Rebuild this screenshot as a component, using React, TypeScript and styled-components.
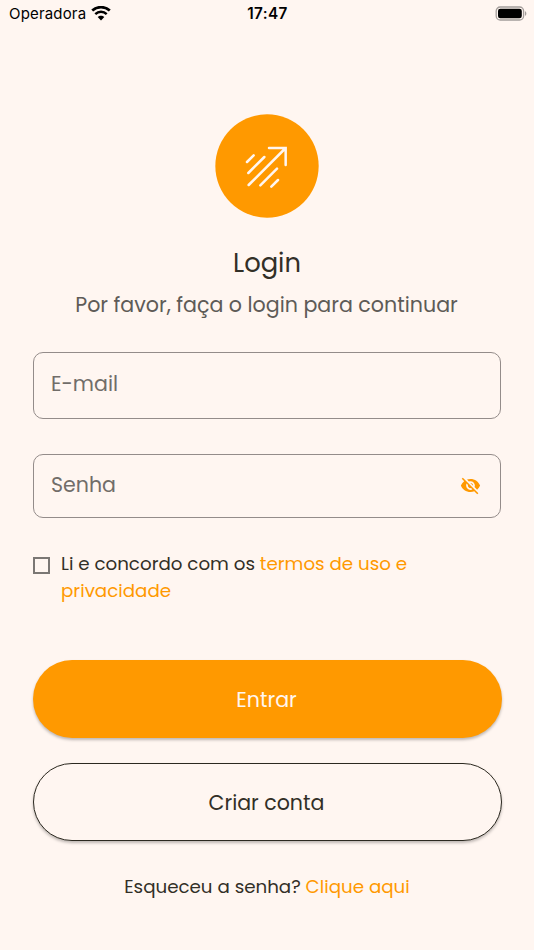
import React from "react";
import styled, { createGlobalStyle } from "styled-components";
import { MdVisibilityOff } from "react-icons/md";

const GlobalStyle = createGlobalStyle`
  * { box-sizing: border-box; }
  body { margin: 0; background: #fff6f1; }
  button, input { font: inherit; }
`;

const Screen = styled.main`
  display: flex;
  flex-direction: column;
  width: 534px;
  height: 950px;
  overflow: hidden;
  background: #fff6f1;
  color: #322f27;
  font-family: Poppins, Inter, sans-serif;
`;

const StatusBar = styled.header`
  display: grid;
  grid-template-columns: 1fr auto 1fr;
  align-items: center;
  height: 27px;
  padding: 0 7px 0 9px;
  color: #000;
  font-family: Inter, sans-serif;
  font-size: 15px;
`;

const Carrier = styled.span`
  display: flex;
  align-items: center;
  gap: 5px;
  letter-spacing: 0.17px;
`;

const Clock = styled.time`
  margin-right: 1px;
  font-size: 15.3px;
  font-weight: 600;
  letter-spacing: 0.35px;
`;

const Battery = styled.svg`
  justify-self: end;
`;

const Content = styled.section`
  display: flex;
  flex-direction: column;
  padding: 87px 33px 0;
`;

const Logo = styled.svg`
  align-self: center;
  width: 104px;
  height: 104px;
`;

const Title = styled.h1`
  margin: 25px 0 0;
  text-align: center;
  font-size: 25.8px;
  font-weight: 400;
  line-height: 40px;
`;

const Subtitle = styled.p`
  margin: 5px 0 0;
  padding-right: 1px;
  color: #5e5b57;
  text-align: center;
  font-size: 20.6px;
  line-height: 34px;
`;

const Field = styled.label<{ $height: number; $gap: number; $shift: number }>`
  display: flex;
  align-items: center;
  height: ${(p) => p.$height}px;
  margin-top: ${(p) => p.$gap}px;
  padding: 0 19px ${(p) => p.$shift}px 17px;
  border: 1px solid #948c8a;
  border-radius: 10px;
  color: #ff9900;
`;

const Input = styled.input`
  flex: 1;
  min-width: 0;
  padding: 0;
  border: 0;
  outline: 0;
  background: transparent;
  color: #322f27;
  font-size: 20.55px;
  line-height: 30px;
  &::placeholder { color: #716d69; opacity: 1; }
`;

const EyeButton = styled.button`
  display: flex;
  margin-top: 2px;
  padding: 0;
  border: 0;
  background: none;
  color: inherit;
`;

const Terms = styled.div`
  display: flex;
  gap: 11px;
  margin-top: 32px;
`;

const Checkbox = styled.input`
  appearance: none;
  flex: none;
  width: 17px;
  height: 17px;
  margin: 7px 0 0;
  border: 2px solid #7b7774;
`;

const TermsText = styled.p`
  margin: 0;
  font-size: 18.25px;
  line-height: 27px;
`;

const Link = styled.a`
  color: #ff9900;
`;

const Button = styled.button<{ $primary?: boolean }>`
  height: 78px;
  margin: ${(p) => (p.$primary ? 56 : 25)}px -0.5px 0;
  padding: 0 1px 0 0;
  border: ${(p) => (p.$primary ? "0" : "1.5px solid #2c2920")};
  border-radius: 39px;
  background: ${(p) => (p.$primary ? "#ff9900" : "#fff6f1")};
  color: ${(p) => (p.$primary ? "#fff6f1" : "#322f27")};
  box-shadow: 0 2px 3px rgba(0, 0, 0, 0.26);
  font-size: 20.55px;
`;

const Recovery = styled.p`
  margin: 32px 0 0;
  text-align: center;
  font-size: 18.25px;
  line-height: 27px;
`;

const WifiIcon = () => (
  <svg width="20" height="15" viewBox="0 0 20 15">
    <path d="M1.2 4.6C6.2 0 13.8 0 18.8 4.6" fill="none" stroke="#000" strokeWidth="2.7" />
    <path d="M4.3 8.1c3.2-3 8.2-3 11.4 0" fill="none" stroke="#000" strokeWidth="2.5" />
    <path d="M6.7 11.1c1.8-1.8 4.8-1.8 6.6 0L10 14.4z" />
  </svg>
);

const BatteryIcon = () => (
  <Battery width="32" height="15" viewBox="0 0 32 15">
    <rect x="1.2" y="1" width="27.4" height="13" rx="4" fill="none" stroke="#a39d9a" strokeWidth="1.3" />
    <rect x="3" y="2.8" width="23.8" height="9.4" rx="2.3" />
    <path d="M30 5.2c1.8.7 1.8 3.9 0 4.6z" fill="#a39d9a" />
  </Battery>
);

const ArrowLogo = () => (
  <Logo viewBox="24 24 312 312">
    <circle cx="180" cy="180" r="155" fill="#ff9900" />
    <path
      d="M186 126H236V177M236 126 125 237M120 168 140 148M124 201 172 153M160 238 210 188M193 242 213 222"
      fill="none"
      stroke="#fff6f1"
      strokeWidth="7.5"
      strokeLinecap="round"
      strokeLinejoin="miter"
    />
  </Logo>
);

export default function App() {
  return (
    <Screen>
      <GlobalStyle />
      <StatusBar>
        <Carrier>
          Operadora
          <WifiIcon />
        </Carrier>
        <Clock>17:47</Clock>
        <BatteryIcon />
      </StatusBar>
      <Content>
        <ArrowLogo />
        <Title>Login</Title>
        <Subtitle>Por favor, faça o login para continuar</Subtitle>
        <Field $height={67} $gap={30} $shift={4}>
          <Input type="email" placeholder="E-mail" />
        </Field>
        <Field $height={64} $gap={35} $shift={3}>
          <Input type="password" placeholder="Senha" />
          <EyeButton aria-label="Mostrar senha">
            <MdVisibilityOff size={21} />
          </EyeButton>
        </Field>
        <Terms>
          <Checkbox type="checkbox" />
          <TermsText>
            Li e concordo com os <Link>termos de uso e<br />privacidade</Link>
          </TermsText>
        </Terms>
        <Button $primary>Entrar</Button>
        <Button>Criar conta</Button>
        <Recovery>
          Esqueceu a senha? <Link>Clique aqui</Link>
        </Recovery>
      </Content>
    </Screen>
  );
}
